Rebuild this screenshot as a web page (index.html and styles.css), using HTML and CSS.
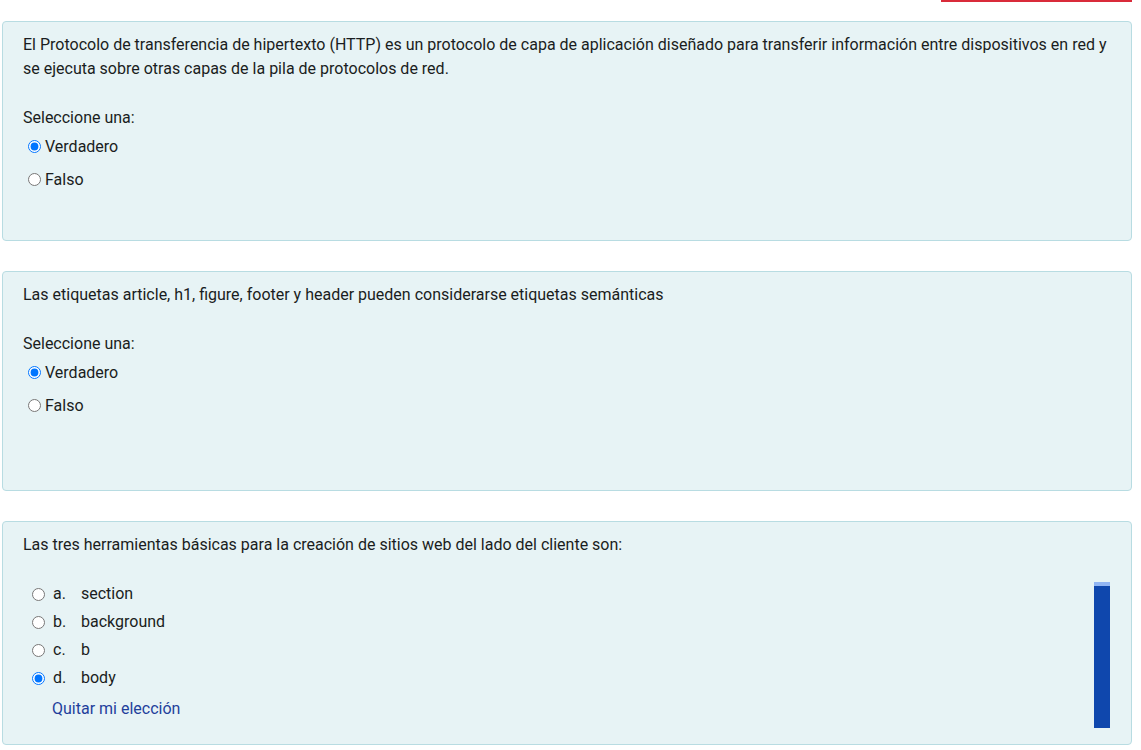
FILE: index.html
```html
<!DOCTYPE html>
<html lang="es">
<head>
<meta charset="utf-8">
<title>Cuestionario</title>
<link rel="stylesheet" href="styles.css">
</head>
<body>
<div class="page">
  <div class="topbar"><div class="topline"></div></div>

  <div class="card">
    <div class="qtext">El Protocolo de transferencia de hipertexto (HTTP) es un protocolo de capa de aplicación diseñado para transferir información entre dispositivos en red y se ejecuta sobre otras capas de la pila de protocolos de red.</div>
    <div class="prompt">Seleccione una:</div>
    <div class="answer">
      <label class="opt"><input type="radio" name="q1" checked><span>Verdadero</span></label>
      <label class="opt"><input type="radio" name="q1"><span>Falso</span></label>
    </div>
  </div>

  <div class="card">
    <div class="qtext">Las etiquetas article, h1, figure, footer y header pueden considerarse etiquetas semánticas</div>
    <div class="prompt">Seleccione una:</div>
    <div class="answer">
      <label class="opt"><input type="radio" name="q2" checked><span>Verdadero</span></label>
      <label class="opt"><input type="radio" name="q2"><span>Falso</span></label>
    </div>
  </div>

  <div class="card card-multi">
    <div class="qtext">Las tres herramientas básicas para la creación de sitios web del lado del cliente son:</div>
    <div class="answer-multi">
      <label class="mopt"><input type="radio" name="q3"><span class="num">a.</span><span>section</span></label>
      <label class="mopt"><input type="radio" name="q3"><span class="num">b.</span><span>background</span></label>
      <label class="mopt"><input type="radio" name="q3"><span class="num">c.</span><span>b</span></label>
      <label class="mopt"><input type="radio" name="q3" checked><span class="num">d.</span><span>body</span></label>
    </div>
    <a class="clear" href="#">Quitar mi elección</a>
    <div class="sidebar"></div>
  </div>
</div>
</body>
</html>
```

FILE: styles.css
```css
html, body {
  margin: 0;
  padding: 0;
  background: #ffffff;
}
body {
  font-family: Roboto, "Liberation Sans", Arial, sans-serif;
  font-size: 16px;
  line-height: 24px;
  color: #1a1d21;
}
.page {
  padding: 0 9px 0 2px;
}
.topbar {
  display: flex;
  justify-content: flex-end;
  margin-bottom: 19px;
}
.topline {
  width: 191px;
  height: 2px;
  background: #d92b3a;
}
.card {
  position: relative;
  box-sizing: border-box;
  min-height: 220px;
  margin-bottom: 30px;
  padding: 11px 20px 23px;
  background: #e7f3f5;
  border: 1px solid #b8dce2;
  border-radius: 4px;
}
.prompt {
  margin-top: 25px;
}
.answer {
  display: flex;
  flex-direction: column;
}
.opt {
  display: flex;
  align-items: center;
  padding: 4.5px 0;
}
.opt input {
  width: 13px;
  height: 13px;
  margin: 0 4px 0 5px;
}
.answer-multi {
  display: flex;
  flex-direction: column;
  margin-top: 23px;
}
.mopt {
  display: flex;
  align-items: center;
  padding: 2px 0;
}
.mopt input {
  width: 13px;
  height: 13px;
  margin: 0 8px 0 9px;
}
.num {
  display: inline-block;
  width: 28px;
}
.clear {
  display: inline-block;
  margin-top: 5px;
  margin-left: 29px;
  color: #1f3f9c;
  text-decoration: none;
}
.sidebar {
  position: absolute;
  right: 21px;
  top: 60px;
  width: 16px;
  height: 142px;
  background: #0f47ad;
  border-top: 4px solid #91b5f3;
}
```
